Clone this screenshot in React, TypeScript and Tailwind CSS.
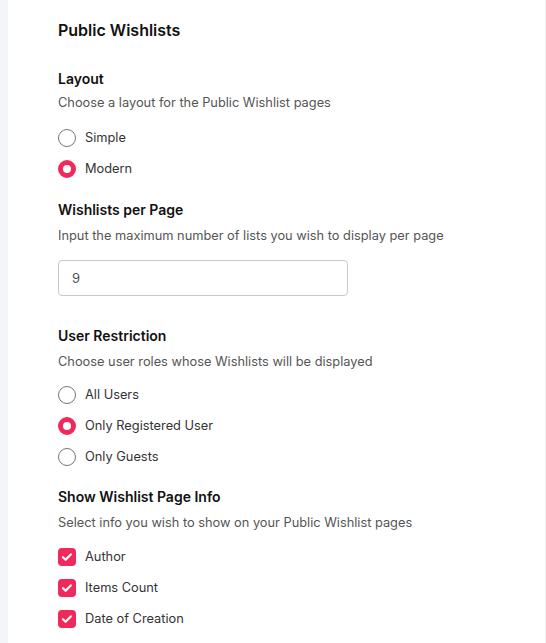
import { useState } from 'react';

const PINK = 'bg-[#f0295a]';

function Radio({ label, checked, onClick }: { label: string; checked: boolean; onClick: () => void }) {
  return (
    <button type="button" onClick={onClick} className="flex items-center h-[31px] text-left">
      {checked ? (
        <span className="w-[18px] h-[18px] rounded-full border-[5px] border-[#f0295a] bg-white" />
      ) : (
        <span className="w-[18px] h-[18px] rounded-full border-[1.5px] border-[#777]" />
      )}
      <span className="ml-[9px] text-[12.8px] text-[#333]">{label}</span>
    </button>
  );
}

function Check({ label, checked, onClick }: { label: string; checked: boolean; onClick: () => void }) {
  return (
    <button type="button" onClick={onClick} className="flex items-center h-[31px] text-left">
      <span
        className={`w-[18px] h-[18px] rounded-[4px] flex items-center justify-center ${
          checked ? PINK : 'border-[1.5px] border-[#777]'
        }`}
      >
        {checked && (
          <svg width="12" height="12" viewBox="0 0 12 12" fill="none">
            <path d="M2 6.2l2.6 2.6 5.2-5.4" stroke="white" strokeWidth={2.2} strokeLinecap="round" strokeLinejoin="round" />
          </svg>
        )}
      </span>
      <span className="ml-[9px] text-[12.8px] text-[#333]">{label}</span>
    </button>
  );
}

function Section({
  title,
  desc,
  wide,
  children,
}: {
  title: string;
  desc: string;
  wide?: boolean;
  children: React.ReactNode;
}) {
  return (
    <div>
      <h3 className="text-[14px] font-semibold text-[#111] leading-[20px]">{title}</h3>
      <p className={`${wide ? 'mt-[6px]' : 'mt-[4px]'} text-[12.8px] text-[#555] leading-[20px]`}>{desc}</p>
      {children}
    </div>
  );
}

export default function App() {
  const [layout, setLayout] = useState('modern');
  const [perPage, setPerPage] = useState('9');
  const [restriction, setRestriction] = useState('registered');
  const [info, setInfo] = useState({ author: true, count: true, date: true });

  return (
    <div className="flex min-h-[643px] bg-white" style={{ fontFamily: 'Inter, "Noto Sans", sans-serif' }}>
      <div className="w-[8px] bg-[#f4f5f7] shrink-0" />
      <div className="flex-1 pl-[50px] pt-[19px] border-r border-[#f0f0f0]">
        <h2 className="text-[16px] font-semibold text-[#111] leading-[22px]">Public Wishlists</h2>

        <div className="mt-[28px]">
          <Section title="Layout" desc="Choose a layout for the Public Wishlist pages">
            <div className="mt-[9px] flex flex-col">
              <Radio label="Simple" checked={layout === 'simple'} onClick={() => setLayout('simple')} />
              <Radio label="Modern" checked={layout === 'modern'} onClick={() => setLayout('modern')} />
            </div>
          </Section>
        </div>

        <div className="mt-[16px]">
          <Section wide title="Wishlists per Page" desc="Input the maximum number of lists you wish to display per page">
            <input
              value={perPage}
              onChange={e => setPerPage(e.target.value)}
              className="mt-[14px] w-[290px] h-[36px] rounded-[4px] border border-[#c8c8c8] px-[13px] text-[13px] text-[#555] outline-none"
            />
          </Section>
        </div>

        <div className="mt-[30px]">
          <Section wide title="User Restriction" desc="Choose user roles whose Wishlists will be displayed">
            <div className="mt-[7px] flex flex-col">
              <Radio label="All Users" checked={restriction === 'all'} onClick={() => setRestriction('all')} />
              <Radio
                label="Only Registered User"
                checked={restriction === 'registered'}
                onClick={() => setRestriction('registered')}
              />
              <Radio label="Only Guests" checked={restriction === 'guests'} onClick={() => setRestriction('guests')} />
            </div>
          </Section>
        </div>

        <div className="mt-[15px]">
          <Section wide title="Show Wishlist Page Info" desc="Select info you wish to show on your Public Wishlist pages">
            <div className="mt-[8px] flex flex-col">
              <Check label="Author" checked={info.author} onClick={() => setInfo({ ...info, author: !info.author })} />
              <Check label="Items Count" checked={info.count} onClick={() => setInfo({ ...info, count: !info.count })} />
              <Check label="Date of Creation" checked={info.date} onClick={() => setInfo({ ...info, date: !info.date })} />
            </div>
          </Section>
        </div>
      </div>
    </div>
  );
}
